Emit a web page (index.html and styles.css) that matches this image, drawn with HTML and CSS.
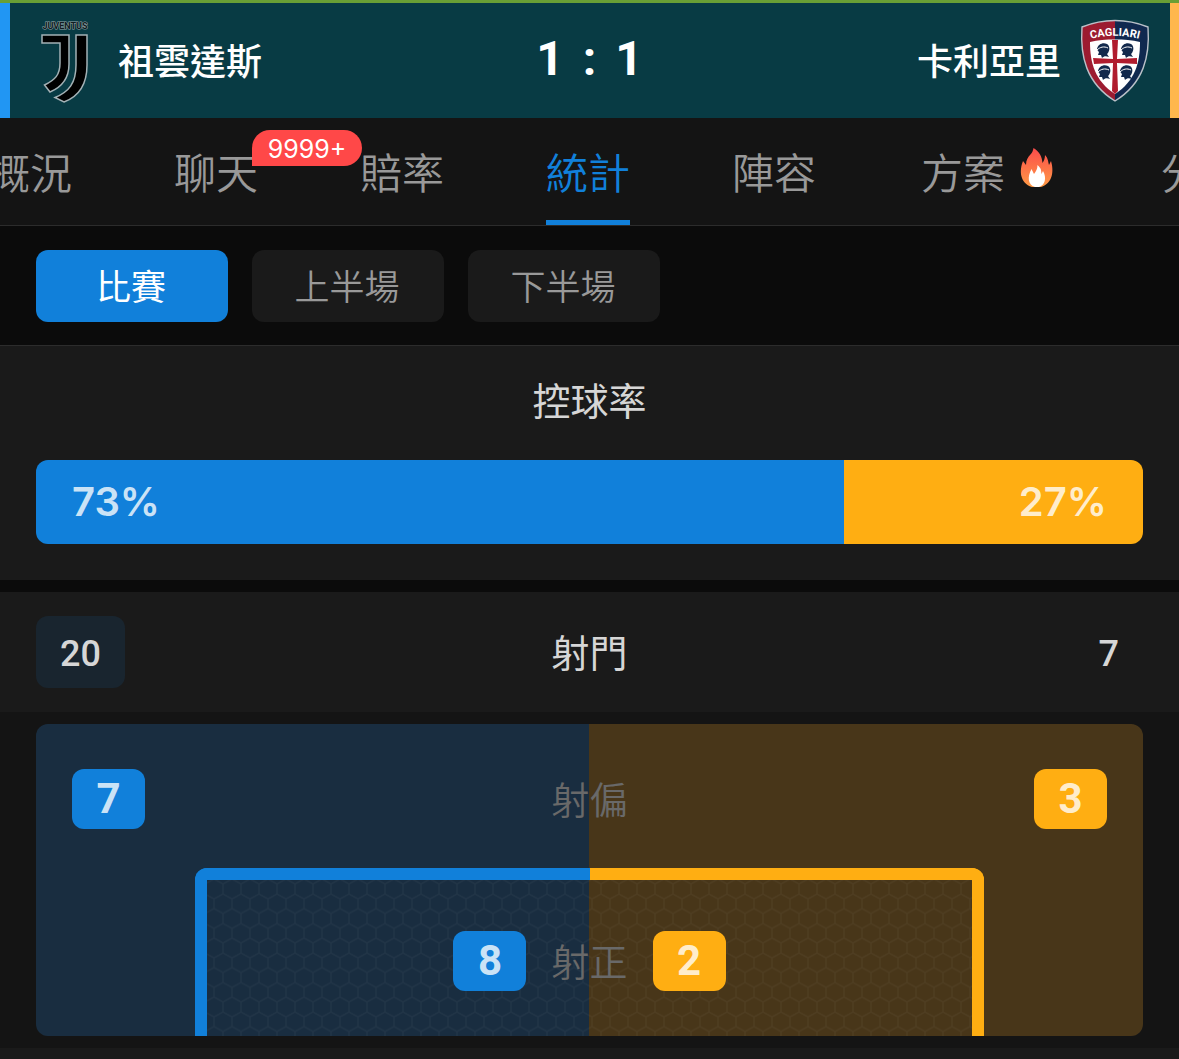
FILE: index.html
```html
<!DOCTYPE html>
<html lang="zh-Hant">
<head>
  <meta charset="UTF-8">
  <meta name="viewport" content="width=device-width, initial-scale=1.0">
  <title>祖雲達斯 1 : 1 卡利亞里</title>
  <link rel="stylesheet" href="styles.css">
</head>
<body>

  <header class="scoreboard">
    <div class="team">
      <svg class="team-logo" viewBox="0 0 72 88" aria-hidden="true">
        <text class="juve-name" x="37" y="12" text-anchor="middle">JUVENTUS</text>
        <g fill="#000" stroke="#a3b1b5" stroke-width="1.5">
          <path d="M14 18H41V47C41 62 34 70 22 75L16.500 68C27 63 32 58 32 46V26H14Z"/>
          <path d="M48 18H59V48C59 67 52 79 36 85L27 80.500C41 75 48 66 48 48Z"/>
        </g>
      </svg>
      <span class="team-name">祖雲達斯</span>
    </div>
    <div class="score"><span>1</span><span>:</span><span>1</span></div>
    <div class="team team-away">
      <span class="team-name">卡利亞里</span>
      <svg class="team-logo" viewBox="0 0 72 88" aria-hidden="true">
        <defs>
          <g id="head">
            <path d="M-6-1C-5-6 0-8 4-6C7-4 7 0 5 3L4 4L6 7C3 6 1 6-1 8L-2 5L-5 5L-4 2L-5 1Z" fill="#12294c"/>
            <path d="M-6 0C-3-3 1-4 5-2" fill="none" stroke="#fff" stroke-width="1"/>
          </g>
          <path id="arc" d="M9 22.500Q36 15 63 22.500"/>
        </defs>
        <path d="M36 3.500C23 3.500 13 6 3 10C1 39 7 66 36 84Z" fill="#9c1b30"/>
        <path d="M36 3.500C49 3.500 59 6 69 10C71 39 65 66 36 84Z" fill="#10294f"/>
        <path d="M36 3.500C49 3.500 59 6 69 10C71 39 65 66 36 84C7 66 1 39 3 10C13 6 23 3.500 36 3.500Z" fill="none" stroke="#b9c0c8" stroke-width="1.400"/>
        <path d="M36 22.500C27 22.500 19 23 11 25C11 46 16 64 36 77C56 64 61 46 61 25C53 23 45 22.500 36 22.500Z" fill="#fff"/>
        <path d="M33 23H39L38 42L58 41V47L38 46L39 74L36 77L33 74L34 46L15 47L14 41L34 42Z" fill="#b01c2e"/>
        <use href="#head" x="24" y="33"/>
        <use href="#head" x="48" y="33"/>
        <use href="#head" x="25" y="55"/>
        <use href="#head" x="47" y="55"/>
        <text class="crest-name"><textPath href="#arc" startOffset="50%" text-anchor="middle">CAGLIARI</textPath></text>
      </svg>
    </div>
  </header>

  <nav class="tabs">
    <a href="#overview" class="tab">概況</a>
    <a href="#chat" class="tab">聊天<span class="tab-badge">9999+</span></a>
    <a href="#odds" class="tab">賠率</a>
    <a href="#stats" class="tab active">統計</a>
    <a href="#lineup" class="tab">陣容</a>
    <a href="#plans" class="tab tab-hot">方案
      <svg class="flame" viewBox="0 0 36 42" aria-hidden="true">
        <defs>
          <linearGradient id="fire" x1="0" y1="0" x2="0" y2="1">
            <stop offset="0" stop-color="#fb4b4b"/>
            <stop offset="1" stop-color="#ff9a45"/>
          </linearGradient>
        </defs>
        <path d="M14.500 1C21 5 23 10 23.500 16C25 14 26 11 26 8C29 11 29 14 30 18L32 14C35 24 34 36 22 40H13C1 36 0 24 4 14L7 18C7 13 9 10 11 8C13 6 14 4 14.500 1Z" fill="url(#fire)"/>
        <path d="M18.500 18C23 22 22 24 22.500 27L24 24C28 31 26 38 20 40H16C9 38 8 30 12.500 22L15 27C17 24 18.500 22 18.500 18Z" fill="#fff"/>
      </svg>
    </a>
    <a href="#analysis" class="tab">分析</a>
  </nav>

  <div class="periods">
    <button type="button" class="period selected">比賽</button>
    <button type="button" class="period">上半場</button>
    <button type="button" class="period">下半場</button>
  </div>

  <main id="stats">
    <section class="possession">
      <h2 class="stat-title">控球率</h2>
      <div class="bar">
        <div class="bar-home" style="width: 73%">73%</div>
        <div class="bar-away">27%</div>
      </div>
    </section>

    <section class="shots">
      <div class="stat-row">
        <span class="value leading">20</span>
        <h2 class="stat-title">射門</h2>
        <span class="value">7</span>
      </div>
      <div class="pitch">
        <div class="off-target">
          <span class="chip home">7</span>
          <span class="label">射偏</span>
          <span class="chip away">3</span>
        </div>
        <div class="goal">
          <svg class="net" aria-hidden="true">
            <defs>
              <pattern id="hex" width="18" height="29.500" patternUnits="userSpaceOnUse" patternTransform="translate(7 9)">
                <path d="M9-5V5L0 10L-9 5M9 5L18 10V19.500L9 24.500L0 19.500V10M9 24.500V34.500M18 10L27 5M0 19.500L-9 24.500M18 19.500L27 24.500" fill="none" stroke="#fff" stroke-opacity=".035" stroke-width="1.500"/>
              </pattern>
            </defs>
            <rect width="100%" height="100%" fill="url(#hex)"/>
          </svg>
          <div class="frame frame-home"></div>
          <div class="frame frame-away"></div>
          <div class="on-target">
            <span class="chip home">8</span>
            <span class="label">射正</span>
            <span class="chip away">2</span>
          </div>
        </div>
      </div>
    </section>

    <section class="next-stat"></section>
  </main>

</body>
</html>
```
FILE: styles.css
```css
* {
  box-sizing: border-box;
}

body {
  margin: 0;
  min-height: 100vh;
  background: #0b0b0b;
  color: #d6d6d6;
  font-family: Roboto, "Noto Sans CJK TC", sans-serif;
  overflow-x: hidden;
}

/* scoreboard */
.scoreboard {
  display: grid;
  grid-template-columns: 1fr auto 1fr;
  align-items: center;
  height: 118px;
  padding: 0 18px;
  background: #083b44;
  border-top: 3px solid #699f35;
  box-shadow: inset 10px 0 #2196f3, inset -9px 0 #ffb74d;
}

.team {
  display: flex;
  align-items: center;
  gap: 18px;
  padding-left: 10px;
}

.team-away {
  justify-content: flex-end;
  padding: 0 10px 0 0;
}

.team-logo {
  width: 72px;
  height: 88px;
}

.team-name {
  padding-bottom: 4px;
  color: #fff;
  font-size: 36px;
  font-weight: 500;
}

.juve-name {
  font: bold 9px Roboto, sans-serif;
  fill: #101c1f;
  stroke: #9aa7aa;
  stroke-width: 1px;
  paint-order: stroke;
}

.crest-name {
  font: bold 11px Roboto, sans-serif;
  fill: #fff;
}

.score {
  display: flex;
  gap: 19px;
  padding-bottom: 4px;
  color: #fff;
  font-family: Roboto, sans-serif;
  font-size: 48px;
  font-weight: 700;
}

/* tabs */
.tabs {
  display: flex;
  gap: 102px;
  height: 108px;
  padding-right: 36px;
  background: #141414;
  border-bottom: 1px solid #2c2c2c;
  overflow: hidden;
}

.tab {
  position: relative;
  display: flex;
  flex: none;
  align-items: center;
  padding-top: 3px;
  border-bottom: 5px solid transparent;
  color: #999;
  font-size: 42px;
  font-weight: 350;
  text-decoration: none;
}

.tab:first-child {
  margin-left: -12px;
}

.tab.active {
  color: #1180da;
  border-color: #1180da;
}

.tab-hot {
  padding-left: 3px;
}

.tab-badge {
  position: absolute;
  top: 12px;
  left: 78px;
  width: 110px;
  border-radius: 18px 18px 18px 0;
  background: #ff4848;
  color: #fff;
  font: 400 25px/38px Inter, sans-serif;
  height: 36px;
  text-align: center;
}

.flame {
  width: 36px;
  height: 42px;
  margin: 0 4px 6px 14px;
}

/* period filter */
.periods {
  display: flex;
  gap: 24px;
  padding: 24px 36px 23px;
  border-bottom: 1px solid #2c2c2c;
}

.period {
  width: 192px;
  height: 72px;
  padding: 0 2px 3px 0;
  border: none;
  border-radius: 12px;
  background: #1a1a1a;
  color: #999;
  font: 350 35px Roboto, "Noto Sans CJK TC", sans-serif;
  cursor: pointer;
}

.period.selected {
  background: #1180da;
  color: #fff;
  font-weight: 400;
}

/* possession */
.possession {
  padding: 26px 36px 36px;
  margin-bottom: 12px;
  background: #1a1a1a;
}

.stat-title {
  margin: 0;
  font-size: 38px;
  line-height: 60px;
  font-weight: 400;
  text-align: center;
}

.bar {
  display: flex;
  margin-top: 28px;
  border-radius: 12px;
  overflow: hidden;
  color: rgba(255, 255, 255, 0.8);
  font: 600 40px/84px Inter, sans-serif;
}

.bar-home {
  padding-left: 36px;
  background: #1180da;
}

.bar-away {
  flex: 1;
  padding-right: 36px;
  background: #ffae12;
  text-align: right;
}

/* shots */
.shots {
  background: #141414;
  padding-bottom: 12px;
}

.stat-row {
  display: grid;
  grid-template-columns: 1fr auto 1fr;
  align-items: center;
  padding: 24px 36px;
  margin-bottom: 12px;
  background: #1a1a1a;
}

.stat-row .stat-title {
  padding-top: 4px;
}

.value {
  justify-self: start;
  height: 72px;
  padding: 0 24px;
  border-radius: 12px;
  font-size: 36px;
  font-weight: 500;
  line-height: 76px;
}

.value:last-child {
  justify-self: end;
}

.leading {
  background: #19252f;
}

.pitch {
  margin: 0 36px;
  padding-top: 45px;
  border-radius: 12px;
  background: linear-gradient(to right, #192d40 50%, #483619 50%);
}

.off-target {
  display: flex;
  justify-content: space-between;
  align-items: center;
  padding: 0 36px;
  margin-bottom: 39px;
}

.chip {
  width: 73px;
  height: 60px;
  border-radius: 12px;
  color: rgba(255, 255, 255, 0.8);
  font-size: 42px;
  font-weight: 700;
  line-height: 60px;
  text-align: center;
}

.home {
  background: #1180da;
}

.away {
  background: #ffae12;
}

.label {
  height: 60px;
  color: #696969;
  font-size: 38px;
  font-weight: 350;
  line-height: 64px;
}

/* everything in the goal shares one grid row */
.goal {
  display: grid;
  grid-template-columns: 1fr 1fr;
  margin: 0 159px;
}

.goal > * {
  grid-row: 1;
}

.frame-home {
  grid-column: 1;
  border-top: 12px solid #1180da;
  border-left: 12px solid #1180da;
  border-top-left-radius: 12px;
}

.frame-away {
  grid-column: 2;
  border-top: 12px solid #ffae12;
  border-right: 12px solid #ffae12;
  border-top-right-radius: 12px;
}

.net {
  grid-column: 1 / 3;
  width: calc(100% - 24px);
  height: 156px;
  margin: 12px 12px 0;
}

.on-target {
  grid-column: 1 / 3;
  display: flex;
  justify-content: center;
  gap: 25px;
  padding: 63px 0 45px;
}

.next-stat {
  min-height: 11px;
  background: #1a1a1a;
}
```
